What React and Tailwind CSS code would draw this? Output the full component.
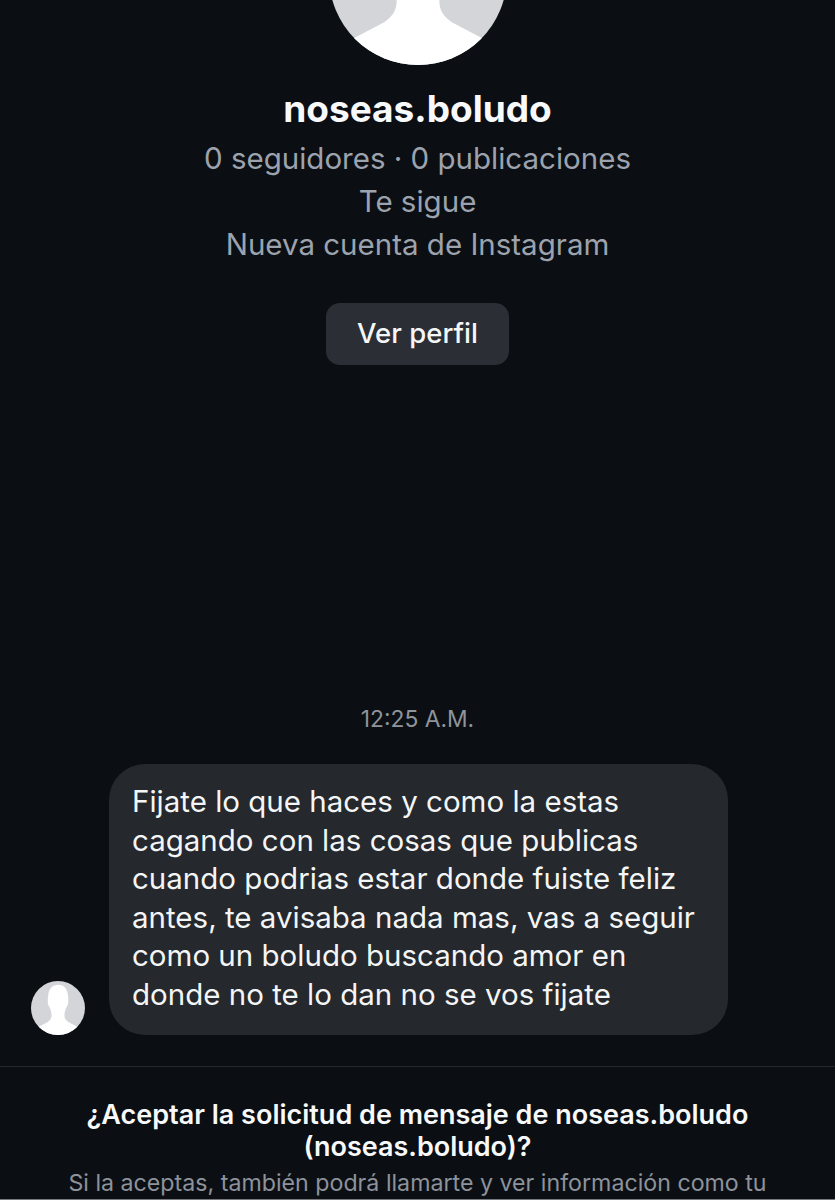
const Avatar = ({ className }) => (
  <svg viewBox="0 0 100 100" className={className}>
    <defs>
      <clipPath id="avatarClip">
        <circle cx="50" cy="50" r="50" />
      </clipPath>
    </defs>
    <g clipPath="url(#avatarClip)">
      <rect width="100" height="100" fill="#d3d5d9" />
      <path
        d="M51 7C40 7 33 14 32 26C31.500 30 31 33 31 38C31 44 33 47 35 50C37 54 38 60 38 64C38 70 35 73 31 76L12 86L12 100L88 100L88 86L69 76C65 73 62 70 62 64C62 60 63 54 65 50C67 47 69 44 69 38C69 33 69 30 68.500 26C67 14 61 7 51 7Z"
        fill="#ffffff"
      />
    </g>
  </svg>
)

export default function App() {
  return (
    <div className="w-[835px] h-[1200px] overflow-hidden flex flex-col bg-[#0b0f13] font-['Inter','Liberation_Sans',sans-serif]">
      <div className="flex flex-col items-center text-center">
        <Avatar className="w-[178px] h-[178px] shrink-0 -mt-[113px]" />
        <div className="mt-[22px] text-[37px] leading-[44px] font-bold text-[#f8f9fa]">noseas.boludo</div>
        <div className="mt-[6px] text-[29.500px] leading-[43px] text-[#9da3ae]">
          <div>0 seguidores · 0 publicaciones</div>
          <div>Te sigue</div>
          <div>Nueva cuenta de Instagram</div>
        </div>
        <button className="mt-[37px] w-[183px] h-[62px] rounded-[14px] bg-[#2b2e34] text-[27.500px] font-medium text-[#f5f6f7]">
          Ver perfil
        </button>
      </div>

      <div className="mt-[341px] text-center text-[22.800px] leading-[26px] text-[#8f949c]">12:25 A.M.</div>

      <div className="mt-[32px] pl-[31px] flex items-end gap-[24px]">
        <Avatar className="w-[54px] h-[54px] shrink-0" />
        <div className="w-[619px] h-[271px] rounded-[36px] bg-[#25282c] pl-[23px] pr-[20px] pt-[18px] text-[29.500px] leading-[38.500px] text-[#f4f5f6]">
          Fijate lo que haces y como la estas cagando con las cosas que publicas cuando podrias estar donde fuiste feliz antes, te avisaba nada mas, vas a seguir como un boludo buscando amor en donde no te lo dan no se vos fijate
        </div>
      </div>

      <div className="mt-[31px] border-t border-[#24272b] px-[40px] pt-[32px] text-center">
        <div className="text-[27px] leading-[32px] font-semibold text-[#f8f9fa]">
          ¿Aceptar la solicitud de mensaje de noseas.boludo (noseas.boludo)?
        </div>
        <div className="mt-[4px] text-[23.200px] leading-[32px] text-[#8d929b]">
          Si la aceptas, también podrá llamarte y ver información como tu
        </div>
      </div>

      <div className="mt-auto h-px shrink-0 bg-[#77797c]" />
    </div>
  )
}
